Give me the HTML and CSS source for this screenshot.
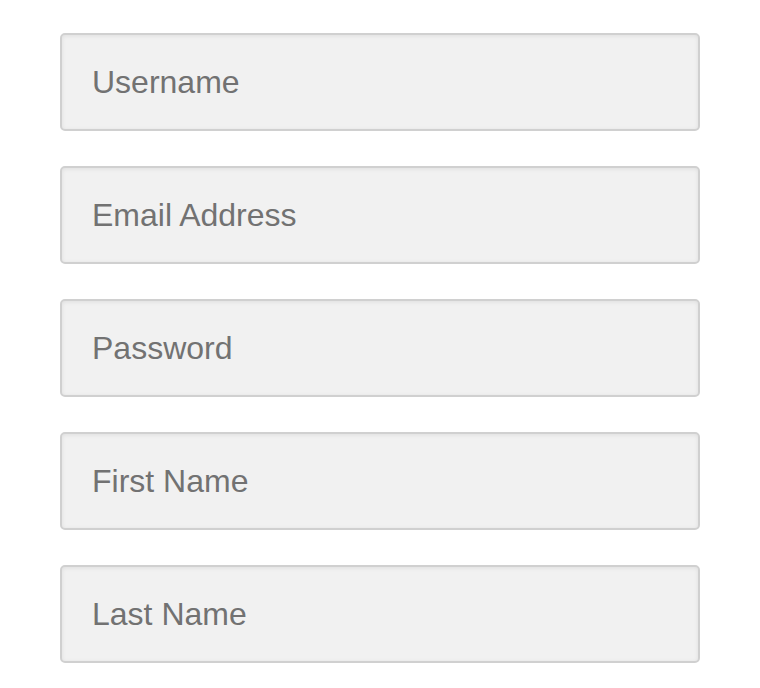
FILE: index.html
```html
<!DOCTYPE html>
<html lang="en">
<head>
    <meta charset="UTF-8" />
    <title>Sign up</title>
    <link rel="stylesheet" href="styles.css">
</head>
<body>
<form class="signup">
    <input class="field" type="text" placeholder="Username">
    <input class="field" type="email" placeholder="Email Address">
    <input class="field" type="password" placeholder="Password">
    <input class="field" type="text" placeholder="First Name">
    <input class="field" type="text" placeholder="Last Name">
</form>
</body>
</html>
```

FILE: styles.css
```css
* {margin:0; padding:0; box-sizing: border-box;}
body {
    background: #fff;
    font-family: "Liberation Sans", Arial, sans-serif;
}
.signup {
    width: 640px;
    margin-left: 60px;
    padding-top: 33px;
    display: flex;
    flex-direction: column;
    gap: 35px;
}
.field {
    display: block;
    width: 100%;
    height: 98px;
    padding: 0 30px;
    border: 2px solid #d0d0d0;
    border-radius: 5px;
    background-color: #f1f1f1;
    box-shadow: inset 0 1px 4px rgba(0,0,0,0.08);
    font-family: "Liberation Sans", Arial, sans-serif;
    font-size: 32px;
    color: #6e6e6e;
    outline: none;
}
.field::placeholder {
    color: #727272;
    opacity: 1;
}
```
